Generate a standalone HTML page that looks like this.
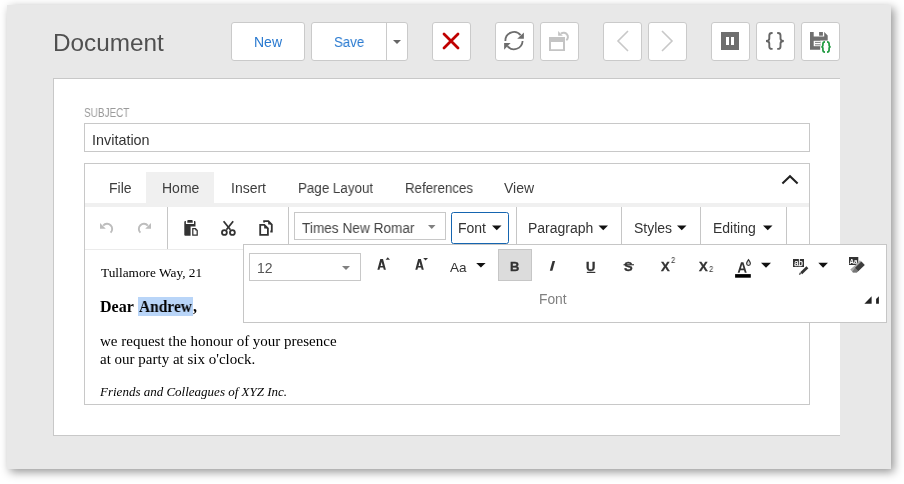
<!DOCTYPE html>
<html><head><meta charset="utf-8">
<style>
html,body{margin:0;padding:0;}
body{width:904px;height:484px;position:relative;overflow:hidden;background:#fff;font-family:"Liberation Sans",sans-serif;}
.a{position:absolute;}
.t{position:absolute;white-space:nowrap;line-height:1;}
.s{font-family:"Liberation Serif",serif;color:#000;}
.win{left:7px;top:5px;width:884px;height:464px;background:#e8e8e8;box-shadow:3px 3px 9px rgba(0,0,0,0.42);}
.btn{position:absolute;top:22px;height:39px;box-sizing:border-box;border:1px solid #cacaca;border-radius:3px;background:#fff;}
.panel{left:53px;top:78px;width:787px;height:358px;box-sizing:border-box;background:#fff;border:1px solid #c8c8c8;border-right:none;}
.inp{left:84px;top:123px;width:726px;height:29px;box-sizing:border-box;border:1px solid #c8c8c8;}
.rich{left:84px;top:163px;width:726px;height:242px;box-sizing:border-box;border:1px solid #c8c8c8;}
.sep{position:absolute;width:1px;background:#c6c6c6;top:207px;height:42px;}
.tab{position:absolute;top:181px;font-size:14px;color:#3d3d3d;white-space:nowrap;line-height:1;}
.rb{position:absolute;top:221px;font-size:14px;color:#333;white-space:nowrap;line-height:1;}
svg.ov{position:absolute;left:0;top:0;will-change:transform;}
.t,.tab,.rb{will-change:transform;}
</style></head>
<body>
<div class="a win"></div>

<!-- title -->
<div class="t" style="left:53px;top:31px;font-size:24.3px;color:#505050;">Document</div>

<!-- top buttons -->
<div class="btn" style="left:231px;width:74px;"></div>
<div class="t" style="left:254px;top:35.3px;font-size:14px;color:#2a7ad0;">New</div>
<div class="btn" style="left:311px;width:97px;"></div>
<div class="a" style="left:386px;top:23px;width:1px;height:37px;background:#cacaca;"></div>
<div class="t" style="left:333.5px;top:35.3px;font-size:14px;color:#2a7ad0;transform-origin:0 0;transform:scaleX(0.95);">Save</div>
<div class="btn" style="left:432px;width:39px;"></div>
<div class="btn" style="left:495px;width:39px;"></div>
<div class="btn" style="left:540px;width:39px;"></div>
<div class="btn" style="left:603px;width:39px;"></div>
<div class="btn" style="left:648px;width:39px;"></div>
<div class="btn" style="left:711px;width:39px;"></div>
<div class="btn" style="left:756px;width:39px;"></div>
<div class="btn" style="left:801px;width:39px;"></div>

<!-- panel -->
<div class="a panel"></div>
<div class="t" style="left:84px;top:107px;font-size:12px;color:#9a9a9a;transform-origin:0 0;transform:scaleX(0.83);">SUBJECT</div>
<div class="a inp"></div>
<div class="t" style="left:91.6px;top:132.5px;font-size:14.4px;color:#333;">Invitation</div>

<!-- rich edit -->
<div class="a rich"></div>
<div class="a" style="left:146px;top:172px;width:68px;height:31px;background:#f0f0f0;"></div>
<div class="a" style="left:85px;top:203px;width:724px;height:4px;background:#f0f0f0;"></div>
<div class="tab" style="left:109px;">File</div>
<div class="tab" style="left:162px;">Home</div>
<div class="tab" style="left:231px;">Insert</div>
<div class="tab" style="left:298px;transform-origin:0 0;transform:scaleX(0.955);">Page Layout</div>
<div class="tab" style="left:405px;transform-origin:0 0;transform:scaleX(0.95);">References</div>
<div class="tab" style="left:504px;">View</div>

<div class="sep" style="left:167px;"></div>
<div class="sep" style="left:288px;"></div>
<div class="sep" style="left:516px;"></div>
<div class="sep" style="left:621px;"></div>
<div class="sep" style="left:700px;"></div>
<div class="sep" style="left:786px;"></div>
<div class="a" style="left:85px;top:249px;width:158px;height:1px;background:#ebebeb;"></div>

<div class="a" style="left:294px;top:212px;width:152px;height:28px;box-sizing:border-box;border:1px solid #c8c8c8;"></div>
<div class="rb" style="left:301.5px;top:220.7px;color:#444;transform-origin:0 0;transform:scaleX(0.975);">Times New Romar</div>
<div class="a" style="left:451px;top:212px;width:58px;height:32px;box-sizing:border-box;border:1px solid #1565b0;border-radius:2.5px;"></div>
<div class="rb" style="left:458px;">Font</div>
<div class="rb" style="left:528px;">Paragraph</div>
<div class="rb" style="left:634px;">Styles</div>
<div class="rb" style="left:713px;">Editing</div>

<!-- document text -->
<div class="a" style="left:138px;top:297px;width:55px;height:19px;background:#b9d5f8;"></div>
<div class="t s" style="left:101px;top:266px;font-size:13.3px;">Tullamore Way, 21</div>
<div class="t s" style="left:100px;top:299px;font-size:16px;font-weight:bold;">Dear</div>
<div class="t s" style="left:139px;top:299px;font-size:16px;font-weight:bold;transform-origin:0 0;transform:scaleX(0.965);">Andrew</div>
<div class="t s" style="left:193px;top:299px;font-size:16px;font-weight:bold;">,</div>
<div class="t s" style="left:100px;top:334px;font-size:15px;">we request the honour of your presence</div>
<div class="t s" style="left:100px;top:352px;font-size:15px;">at our party at six o'clock.</div>
<div class="t s" style="left:100px;top:385px;font-size:13px;font-style:italic;">Friends and Colleagues of XYZ Inc.</div>

<!-- popup -->
<div class="a" style="left:243px;top:244px;width:644px;height:79px;box-sizing:border-box;border:1px solid #c6c6c6;background:#fff;"></div>
<div class="a" style="left:249px;top:253px;width:112px;height:28px;box-sizing:border-box;border:1px solid #c8c8c8;"></div>
<div class="t" style="left:257px;top:261px;font-size:14px;color:#555;">12</div>
<div class="t" style="left:450px;top:261px;font-size:13.5px;color:#333;">Aa</div>
<div class="a" style="left:498px;top:249px;width:34px;height:32px;box-sizing:border-box;border:1px solid #c6c6c6;background:#dcdcdc;"></div>
<div class="t" style="left:510px;top:260px;font-size:13px;font-weight:bold;color:#333;-webkit-text-stroke:0.35px #333;">B</div>
<div class="t" style="left:586px;top:260px;font-size:13px;font-weight:bold;color:#333;-webkit-text-stroke:0.35px #333;">U</div>
<div class="t" style="left:624px;top:260px;font-size:13px;font-weight:bold;color:#333;-webkit-text-stroke:0.35px #333;">S</div>
<div class="t" style="left:661px;top:260px;font-size:13px;font-weight:bold;color:#333;-webkit-text-stroke:0.35px #333;">X</div>
<div class="t" style="left:670.5px;top:255.5px;font-size:9px;color:#333;transform-origin:0 0;transform:scaleX(0.85);">2</div>
<div class="t" style="left:699px;top:260px;font-size:13px;font-weight:bold;color:#333;-webkit-text-stroke:0.35px #333;">X</div>
<div class="t" style="left:708.8px;top:265px;font-size:9px;color:#333;transform-origin:0 0;transform:scaleX(0.85);">2</div>
<div class="t" style="left:539.3px;top:293.3px;font-size:13.8px;color:#808080;">Font</div>

<svg class="ov" width="904" height="484" viewBox="0 0 904 484">
  <!-- save dropdown -->
  <path d="M393 40H401L397 44Z" fill="#666"/>
  <!-- X -->
  <path d="M444 34L458 48M458 34L444 48" stroke="#c00000" stroke-width="2.8" stroke-linecap="round" fill="none"/>
  <!-- refresh -->
  <g fill="none" stroke="#6d6d6d" stroke-width="1.8">
    <path d="M505.4 41A8.6 8.6 0 0 1 520.6 35.1"/>
    <path d="M522.6 41A8.6 8.6 0 0 1 507.4 46.1"/>
  </g>
  <path d="M523.9 32.6V38.7H517.2Z" fill="#6d6d6d"/>
  <path d="M504.1 43H510.6L504.1 49.7Z" fill="#6d6d6d"/>
  <!-- restore -->
  <path d="M549 37H565V51H549Z M551 42V49.2H563V42Z" fill="#c4c4c4" fill-rule="evenodd"/>
  <path d="M561 33.6A4 4 0 1 1 566.3 40.3" fill="none" stroke="#c4c4c4" stroke-width="2"/>
  <path d="M558.1 31.1V35.7H562.8Z" fill="#c4c4c4"/>
  <!-- prev/next -->
  <path d="M628 31L618 41L628 51" fill="none" stroke="#c8c8c8" stroke-width="1.6"/>
  <path d="M662 31L672 41L662 51" fill="none" stroke="#c8c8c8" stroke-width="1.6"/>
  <!-- pause -->
  <path d="M721 32H739V50H721Z M726 37V45H729V37Z M731 37V45H734V37Z" fill="#6e6e6e" fill-rule="evenodd"/>
  <!-- braces -->
  <g fill="none" stroke="#666" stroke-width="1.9">
    <path d="M772.6 33H771.8Q769.3 33 769.3 35.5V38.5Q769.3 41 766 41Q769.3 41 769.3 43.5V46.4Q769.3 48.9 771.8 48.9H772.6"/>
    <path d="M777.2 33H778Q780.5 33 780.5 35.5V38.5Q780.5 41 783.8 41Q780.5 41 780.5 43.5V46.4Q780.5 48.9 778 48.9H777.2"/>
  </g>
  <!-- save script -->
  <path d="M810 32H824.2L827.7 35.5V40.5H820.2V49.7H810Z" fill="#6f6f6f"/>
  <rect x="813.7" y="32" width="10.5" height="4.5" fill="#fff"/>
  <rect x="819.1" y="32" width="3.8" height="3.7" fill="#6f6f6f"/>
  <rect x="813.7" y="40.8" width="6.5" height="5.4" fill="#fff"/>
  <path d="M815 42.4H820.5M815 44.8H820.5" stroke="#6f6f6f" stroke-width="0.9"/>
  <g fill="none" stroke="#1f9a40" stroke-width="1.7">
    <path d="M825 41.8Q822.9 41.8 822.9 44V45.5Q822.9 46.8 821.3 46.8Q822.9 46.8 822.9 48.1V50Q822.9 52.2 825 52.2"/>
    <path d="M827 41.8Q829.1 41.8 829.1 44V45.5Q829.1 46.8 830.7 46.8Q829.1 46.8 829.1 48.1V50Q829.1 52.2 827 52.2"/>
  </g>
  <!-- chevron up -->
  <path d="M782.4 183.4L790 176.3L797.6 183.4" fill="none" stroke="#222" stroke-width="2.1"/>
  <!-- undo / redo -->
  <g fill="none" stroke="#bdbdbd" stroke-width="1.9">
    <path d="M103.2 225.6A5.1 5.1 0 1 1 110.6 232.6"/>
    <path d="M147.8 225.6A5.1 5.1 0 1 0 140.4 232.6"/>
  </g>
  <path d="M100 222.9V228.7H105.8Z" fill="#bdbdbd"/>
  <path d="M151 222.9V228.7H145.2Z" fill="#bdbdbd"/>
  <!-- paste -->
  <path d="M184.3 222Q184.3 221 185.3 221H185.9V224H194V221H194.5Q195.5 221 195.5 222V226.6H190.6V235.8H185.3Q184.3 235.8 184.3 234.8Z" fill="#333"/>
  <path d="M187.3 222.7V220.9Q187.3 220 188.2 220H191.8Q192.7 220 192.7 220.9V222.7Z" fill="#333"/>
  <path d="M192.8 228.7H195.5L197.2 230.4V235.2H192.8Z" fill="#fff" stroke="#333" stroke-width="1.25" stroke-linejoin="miter"/>
  <path d="M195.3 228.7V230.6H197.2Z" fill="#333"/>
  <!-- cut -->
  <g fill="none" stroke="#333" stroke-width="1.8">
    <path d="M223.6 221.3L230.4 229.8"/>
    <path d="M233.2 221.3L226.4 229.8"/>
    <circle cx="224.4" cy="232.5" r="2.45"/>
    <circle cx="232.4" cy="232.5" r="2.45"/>
  </g>
  <!-- copy -->
  <g fill="none" stroke="#333" stroke-width="1.8" stroke-linejoin="miter" stroke-linecap="butt">
    <path d="M264.1 222.6V221.2H268.4L271.8 224.6V231.5H270.3"/>
    <path d="M260.2 224.8H264.3L267.9 228.4V234.8H260.2Z"/>
  </g>
  <path d="M264.2 224.5V228.4H268.2Z" fill="#333"/>
  <path d="M268.2 221V224.6H271.9Z" fill="#333"/>
  <!-- font combo arrow -->
  <path d="M428 225H435.5L431.75 229Z" fill="#808080"/>
  <!-- Font btn arrow + ribbon arrows -->
  <path d="M492 225.5H501.5L496.75 230.2Z" fill="#111"/>
  <path d="M598.5 225.5H608L603.25 230.2Z" fill="#111"/>
  <path d="M677 225.5H686.5L681.75 230.2Z" fill="#111"/>
  <path d="M763 225.5H772.5L767.75 230.2Z" fill="#111"/>
  <!-- size combo arrow -->
  <path d="M342 266H350L346 270Z" fill="#808080"/>
  <!-- grow/shrink font -->
  <path d="M377.4 269.8L380.3 259H383.0L385.9 269.8H383.8L383.2 267.6H380.1L379.5 269.8Z M380.6 266H382.7L381.65 261.9Z" fill="#333" fill-rule="evenodd"/>
  <path d="M385.6 259.8H390L387.8 257.2Z" fill="#333"/>
  <path d="M415.3 269.8L418.2 259H420.9L423.8 269.8H421.7L421.1 267.6H418.0L417.4 269.8Z M418.5 266H420.6L419.55 261.9Z" fill="#333" fill-rule="evenodd"/>
  <path d="M423.2 257.9H428L425.6 260.6Z" fill="#333"/>
  <!-- Aa arrow -->
  <path d="M476.2 263H485.6L480.9 267.5Z" fill="#111"/>
  <path d="M552.5 261H555.1L552.4 270.7H549.8Z" fill="#333"/>
  <!-- U underline, S strike -->
  <rect x="586.8" y="271.8" width="8.5" height="1.2" fill="#333"/>
  <rect x="623.5" y="264.2" width="10.5" height="1.1" fill="#333"/>
  <!-- font color -->
  <path d="M737.7 272.7L741 262.2H743.4L746.7 272.7H744.8L744 270.2H740.4L739.6 272.7Z M740.9 268.6H743.5L742.2 264.2Z" fill="#333" fill-rule="evenodd"/>
  <rect x="735.1" y="274.1" width="15.7" height="3.6" fill="#000"/>
  <path d="M748.5 259.6Q746.6 262.2 746.6 263.6Q746.6 265.5 748.5 265.5Q750.4 265.5 750.4 263.6Q750.4 262.2 748.5 259.6Z" fill="#ddd" stroke="#333" stroke-width="1.1"/>
  <path d="M761 262.8H771L766 267.8Z" fill="#111"/>
  <!-- highlight -->
  <rect x="793" y="259" width="11" height="8" fill="#333"/>
  <text x="794.2" y="265.6" font-family="Liberation Sans" font-size="8.6" fill="#fff" stroke="#fff" stroke-width="0.25" textLength="8.6" lengthAdjust="spacingAndGlyphs">ab</text>
  <path d="M807.4 267.3L801.2 273.3" stroke="#333" stroke-width="2.8"/>
  <path d="M799.8 272.5L798.9 274.9L801.3 274Z" fill="#333"/>
  <path d="M818.3 262.8H827.9L823.1 267.8Z" fill="#111"/>
  <!-- clear format -->
  <rect x="849" y="257" width="9.3" height="8" fill="#333"/>
  <text x="849.6" y="263.9" font-family="Liberation Sans" font-weight="bold" font-size="7.8" fill="#fff" textLength="8" lengthAdjust="spacingAndGlyphs">Aa</text>
  <path d="M859.9 260.2L864.7 264.9L856.8 272.6L853 272.5L850.2 269.6L855.2 265.2Z" fill="#a6a6a6"/>
  <path d="M861.4 261.6L864.7 264.9L858.2 271.2L854.9 268Z" fill="#3d3d3d"/>
  <path d="M854.9 268L858.2 271.2L856.8 272.6L853 272.5L852.3 271.8Z" fill="#767676"/>
  <!-- launcher -->
  <path d="M864.4 303.7H871.6V296.2Z" fill="#222"/>
  <path d="M876.1 298.9L878.9 296.2V303.7H876.1Z" fill="#222"/>
</svg>
</body></html>
